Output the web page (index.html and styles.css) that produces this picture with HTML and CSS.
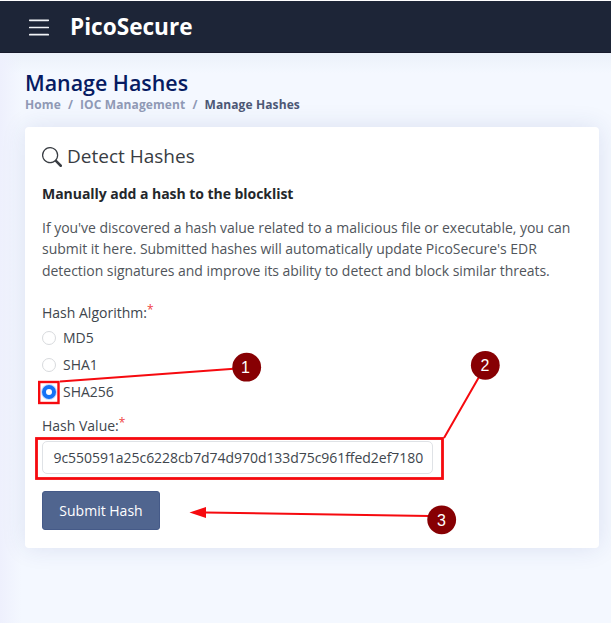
FILE: index.html
```html
<!DOCTYPE html>
<html lang="en">
<head>
<meta charset="utf-8">
<title>PicoSecure</title>
<link rel="stylesheet" href="styles.css">
</head>
<body>
<div class="app">
  <header class="topbar">
    <svg class="menu" viewBox="0 0 20 17" width="20" height="17"><path d="M.7 1.3h18.6M.7 8.5h18.6M.7 15.7h18.6"/></svg>
    <span class="brand">PicoSecure</span>
  </header>
  <main class="main">
    <h1 class="title">Manage Hashes</h1>
    <nav class="crumbs"><span>Home</span><span class="sep">/</span><span>IOC Management</span><span class="sep">/</span><span class="current">Manage Hashes</span></nav>
    <section class="card">
      <h2 class="heading">
        <svg width="20" height="20" viewBox="0 0 16 16" fill="currentColor"><path d="M11.742 10.344a6.5 6.5 0 1 0-1.397 1.398h-.001c.03.04.062.078.098.115l3.85 3.85a1 1 0 0 0 1.415-1.414l-3.85-3.85a1.007 1.007 0 0 0-.115-.1zM12 6.5a5.5 5.5 0 1 1-11 0 5.5 5.5 0 0 1 11 0z"/></svg>
        <span>Detect Hashes</span>
      </h2>
      <h3 class="sub">Manually add a hash to the blocklist</h3>
      <p class="desc">If you've discovered a hash value related to a malicious file or executable, you can<br>submit it here. Submitted hashes will automatically update PicoSecure's EDR<br>detection signatures and improve its ability to detect and block similar threats.</p>
      <div class="label"><span>Hash Algorithm:</span><sup>*</sup></div>
      <div class="option"><i class="radio"></i><span>MD5</span></div>
      <div class="option"><i class="radio"></i><span>SHA1</span></div>
      <div class="option"><i class="radio checked"></i><span>SHA256</span></div>
      <div class="label value"><span>Hash Value:</span><sup>*</sup></div>
      <div class="input">9c550591a25c6228cb7d74d970d133d75c961ffed2ef7180</div>
      <button class="submit">Submit Hash</button>
    </section>
  </main>
  <svg class="notes" width="611" height="635" viewBox="0 0 611 635">
    <g class="stroke">
      <path d="M60 381.500L234 368.700M444 438L479 377M205 512.600L429 516"/>
      <rect class="small" x="39.200" y="382" width="19.300" height="21"/>
      <rect x="36.500" y="438.500" width="406" height="40"/>
    </g>
    <path class="head" d="M189.500 512.500L206 507v11z"/>
    <g class="dots"><circle cx="246.700" cy="367.200" r="14.400"/><circle cx="485.300" cy="365.300" r="14.400"/><circle cx="441.700" cy="519.800" r="14.400"/></g>
    <g class="nums"><text x="245.500" y="373">1</text><text x="485" y="371">2</text><text x="441.500" y="525.500">3</text></g>
  </svg>
</div>
</body>
</html>
```
FILE: styles.css
```css
* { box-sizing: border-box; }
body { margin: 0; background: #fff; font-family: "Open Sans", sans-serif; color: #40464d; }
.app { position: relative; width: 611px; height: 635px; overflow: hidden; padding-top: 1px; }
.topbar { height: 52px; background: #1d2537; border-bottom: 1px solid #171a2c; display: flex; align-items: center; padding-left: 29px; }
.menu { fill: none; stroke: #f1f3f6; stroke-width: 1.700; stroke-linecap: round; margin-top: 2px; }
.brand { margin: 0 0 0 21px; font-size: 22.600px; line-height: 30px; font-weight: 700; color: #fff; }
.main { height: 570px; background: linear-gradient(90deg, #eef0fd, rgba(238,240,253,0) 22px), linear-gradient(#ebf1f9, #f4f8ff 20px); padding: 18px 12px 0 25px; overflow: hidden; }
.title { margin: 0; height: 24px; font-size: 21.400px; line-height: 24px; font-weight: 600; color: #061b62; white-space: nowrap; }
.crumbs { display: flex; height: 14px; margin-top: 3px; font-size: 12px; line-height: 14px; font-weight: 700; letter-spacing: .11px; color: #8f99b5; white-space: nowrap; }
.sep { margin: 0 7px; }
.current { color: #4c5775; }
.card { margin-top: 15px; height: 421px; background: #fff; border-radius: 4px; padding: 17px 17px 18px; box-shadow: 0 0 25px rgba(45,60,140,.12); white-space: nowrap; }
.heading { margin: 0; display: flex; align-items: center; gap: 5px; height: 24px; font-size: 19px; line-height: 24px; font-weight: 400; color: #383c42; }
.heading svg { margin-top: 1px; }
.sub { margin: 16px 0 0; font-size: 14px; line-height: 20px; font-weight: 700; letter-spacing: -.04px; color: #24272b; }
.desc { margin: 13px 0 0; font-size: 14px; line-height: 21.300px; letter-spacing: -.035px; color: #50555b; }
.label { display: flex; height: 20px; margin-top: 22px; font-size: 14px; line-height: 20px; }
.label sup { color: #f04242; font-size: 12px; line-height: 14px; }
.option { display: flex; align-items: center; gap: 7px; height: 27px; font-size: 14px; line-height: 20px; }
.label + .option { margin-top: 2px; }
.radio { width: 14px; height: 14px; border: 1px solid #d8dadd; border-radius: 50%; }
.radio.checked { border: 4px solid #1472f5; background: #fff; box-shadow: 0 0 0 1px #c7ddff; }
.label.value { margin-top: 10px; }
.input { width: 391px; height: 33px; margin-top: 5px; border: 1px solid #dfe2e6; border-radius: 5px; padding: 0 10.500px; font-size: 14px; line-height: 31px; letter-spacing: -.05px; }
.submit { display: block; width: 118px; height: 39px; margin: 17px 0 0; padding: 1px 0 0; border: 1px solid #455a88; border-radius: 3px; background: #50658f; color: #fff; font: 14px/20px "Open Sans", sans-serif; }
.notes { position: absolute; left: 0; top: 0; }
.stroke { fill: none; stroke: #f60a0f; stroke-width: 2; }
.stroke rect { stroke-width: 2.800; }
.stroke .small { stroke-width: 2.400; }
.head { fill: #f60a0f; }
.dots { fill: #870003; }
.nums { fill: #fff; font: 16px "Liberation Sans", sans-serif; text-anchor: middle; }
```
